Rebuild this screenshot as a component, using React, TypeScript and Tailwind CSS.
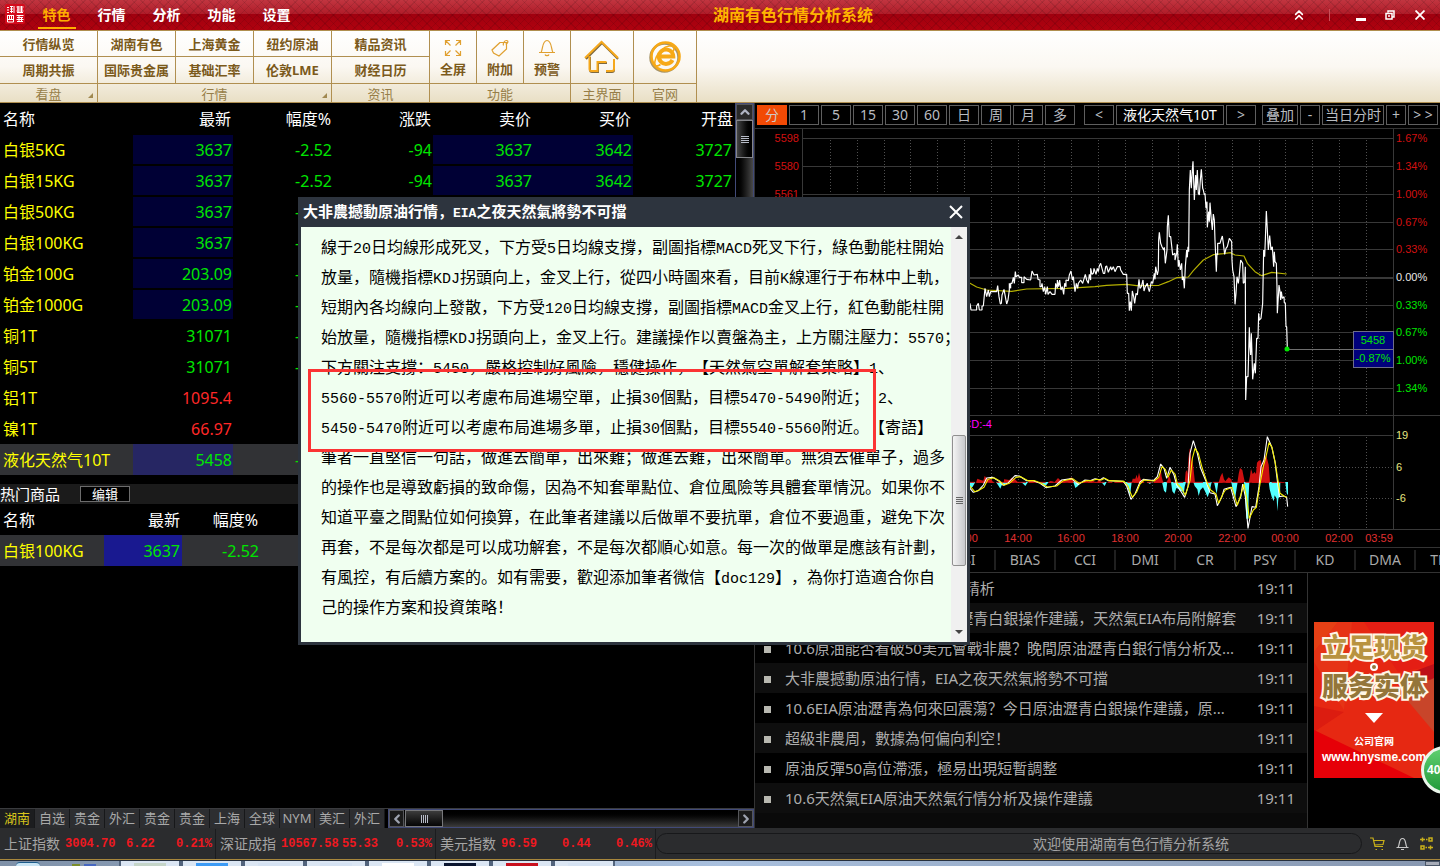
import React from "react";
import { ChevronsUp, ChevronLeft, ChevronRight, ChevronUp } from "lucide-react";

type Quote = {
  name: string;
  last: string;
  pct: string;
  chg?: string;
  ask?: string;
  bid?: string;
  open?: string;
  tint?: boolean;
  up?: boolean;
  selected?: boolean;
};

const quotes: Quote[] = [
  { name: "白银5KG", last: "3637", pct: "-2.52", chg: "-94", ask: "3637", bid: "3642", open: "3727", tint: true },
  { name: "白银15KG", last: "3637", pct: "-2.52", chg: "-94", ask: "3637", bid: "3642", open: "3727", tint: true },
  { name: "白银50KG", last: "3637", pct: "-2.52", tint: true },
  { name: "白银100KG", last: "3637", pct: "-2.52", tint: true },
  { name: "铂金100G", last: "203.09", pct: "-1.86", tint: true },
  { name: "铂金1000G", last: "203.09", pct: "-1.86", tint: true },
  { name: "铜1T", last: "31071", pct: "-0.52" },
  { name: "铜5T", last: "31071", pct: "-0.52" },
  { name: "铝1T", last: "1095.4", pct: "0.32", up: true },
  { name: "镍1T", last: "66.97", pct: "0.41", up: true },
  { name: "液化天然气10T", last: "5458", pct: "-0.87", selected: true },
];

const news = [
  "10.6現貨原油瀝青行情走勢精析",
  "10.06原油行情如何布局？瀝青白銀操作建議，天然氣EIA布局附解套",
  "10.6原油能否看破50美元會戰非農？晚間原油瀝青白銀行情分析及...",
  "大非農撼動原油行情，EIA之夜天然氣將勢不可擋",
  "10.6EIA原油瀝青為何來回震蕩？今日原油瀝青白銀操作建議，原...",
  "超級非農周，數據為何偏向利空！",
  "原油反彈50高位滯漲，極易出現短暫調整",
  "10.6天然氣EIA原油天然氣行情分析及操作建議",
];

const article = [
  "線于20日均線形成死叉，下方受5日均線支撐，副圖指標MACD死叉下行，綠色動能柱開始",
  "放量，隨機指標KDJ拐頭向上，金叉上行，從四小時圖來看，目前K線運行于布林中上軌，",
  "短期內各均線向上發散，下方受120日均線支撐，副圖指標MACD金叉上行，紅色動能柱開",
  "始放量，隨機指標KDJ拐頭向上，金叉上行。建議操作以賣盤為主，上方關注壓力：5570；",
  "下方關注支撐：5450，嚴格控制好風險，穩健操作，【天然氣空單解套策略】1、",
  "5560-5570附近可以考慮布局進場空單，止損30個點，目標5470-5490附近； 2、",
  "5450-5470附近可以考慮布局進場多單，止損30個點，目標5540-5560附近。【寄語】",
  "筆者一直堅信一句話，做進去簡單，出來難；做進去難，出來簡單。無須去催單子，過多",
  "的操作也是導致虧損的致命傷，因為不知套單點位、倉位風險等具體套單情況。如果你不",
  "知道平臺之間點位如何換算，在此筆者建議以后做單不要抗單，倉位不要過重，避免下次",
  "再套，不是每次都是可以成功解套，不是每次都順心如意。每一次的做單是應該有計劃，",
  "有風控，有后續方案的。如有需要，歡迎添加筆者微信【doc129】，為你打造適合你自",
  "己的操作方案和投資策略！",
];

const indices = [
  { name: "上证指数", value: "3004.70", diff: "6.22", pct: "0.21%" },
  { name: "深证成指", value: "10567.58", diff: "55.33", pct: "0.53%" },
  { name: "美元指数", value: "96.59", diff: "0.44", pct: "0.46%" },
];

const periods = ["1", "5", "15", "30", "60", "日", "周", "月", "多"];
const studies = ["KDJ", "MA", "MACD", "RSI", "BIAS", "CCI", "DMI", "CR", "PSY", "KD", "DMA", "TRIX"];
const boards = ["湖南", "自选", "贵金", "外汇", "贵金", "贵金", "上海", "全球", "NYM", "美汇", "外汇"];

// latin runs are set in a typewriter face, the rest stays in the CJK one
const Mixed = ({ text, latin }: { text: string; latin: string }) => (
  <>
    {text.split(/([A-Za-z0-9 -]+)/).map((part, i) =>
      i % 2 ? (
        <span key={i} className={latin}>
          {part}
        </span>
      ) : (
        part
      )
    )}
  </>
);

const TitleBar = () => (
  <header className="flex h-[30px] items-stretch bg-[repeating-linear-gradient(45deg,#00000018_0_1px,transparent_1px_6px),repeating-linear-gradient(135deg,#00000018_0_1px,transparent_1px_6px),linear-gradient(#c13540_0%,#b01c29_46%,#a0000f_48%,#b0020f_100%)]">
    <div className="flex w-[306px] shrink-0 items-stretch pl-[5px]">
      <svg viewBox="0 0 20 20" className="mt-1 h-5 w-5" fill="none" stroke="#fff" strokeWidth="1">
        <rect width="20" height="20" rx="2" fill="#d40b1c" stroke="none" />
        <path d="M2 3.5h2M2 6h2M2 8.500h2M5 2.500h3M5 5h3M5 7.500h3M6.500 2v7M9 2v7M11.500 3h7M12 5h6M11.500 7h7M13 2v6M16.500 2v6M12 8.500h6" />
        <path d="M2 11.500h7M2.500 12v6h6v-6M4.500 12v3M6.500 12v3M3 15.500h5M11.500 11.500h7M12 13.500h6M11.500 15.500h7M14 11v7M16.500 13v5M12 17.500h6" />
      </svg>
      <nav className="ml-1 flex">
        {["特色", "行情", "分析", "功能", "设置"].map((item, i) => (
          <button
            key={item}
            className={
              i === 0
                ? "flex w-[55px] justify-center text-[14px] leading-[30px] font-bold text-[#ffae00]"
                : "flex w-[55px] justify-center text-[14px] leading-[30px] font-bold text-white"
            }
          >
            <span className={i === 0 ? "h-[29px] border-b-2 border-[#ffae00] px-[5px]" : ""}>{item}</span>
          </button>
        ))}
      </nav>
    </div>
    <h1 className="flex-1 text-center text-[16px] leading-[31px] font-bold text-[#ffb400]">湖南有色行情分析系统</h1>
    <div className="flex w-[160px] shrink-0 items-center text-white">
      <button aria-label="收起" className="ml-[11px] w-4">
        <ChevronsUp size={16} strokeWidth={2.5} />
      </button>
      <span className="ml-[22px] h-3 w-px bg-[#c8505a]" />
      <button aria-label="最小化" className="ml-[26px] flex h-3 w-[10px] items-end">
        <span className="h-[3px] w-full bg-white" />
      </button>
      <button aria-label="还原" className="ml-[19px]">
        <svg viewBox="0 0 10 10" className="h-[10px] w-[10px]" fill="none" stroke="#fff" strokeWidth="1.500">
          <path d="M3 2.500V1h6v6H7.500M1 3.500h6V9H1zM3 6h2" />
        </svg>
      </button>
      <button aria-label="关闭" className="ml-5">
        <svg viewBox="0 0 10 10" className="h-[10px] w-[10px]" stroke="#fff" strokeWidth="1.800">
          <path d="M.5.5l9 9M9.500.5l-9 9" />
        </svg>
      </button>
    </div>
  </header>
);

const Corner = () => (
  <svg viewBox="0 0 5 5" className="absolute right-1 bottom-1 h-[5px] w-[5px]">
    <path d="M5 0v5H0z" fill="#a08850" />
  </svg>
);

const RibbonGroup = ({
  label,
  width,
  corner,
  children,
}: {
  label: string;
  width: string;
  corner?: boolean;
  children: React.ReactNode;
}) => (
  <div className={`${width} flex shrink-0 flex-col border-r border-[#b08f50]`}>
    <div className="flex h-[52px] shrink-0">{children}</div>
    <div className="relative h-[19px] border-t border-[#b08f50] text-center text-[13px] leading-5 text-[#977e48]">
      {label}
      {corner && <Corner />}
    </div>
  </div>
);

const Stack = ({ items }: { items: string[] }) => (
  <div className="flex flex-1 flex-col border-r border-[#b08f50] last:border-r-0">
    <button className="h-[26px] border-b border-[#b08f50] text-[13px] leading-[26px] font-bold text-[#7b5a1b]">{items[0]}</button>
    <button className="h-[26px] text-[13px] leading-[26px] font-bold text-[#7b5a1b]">{items[1]}</button>
  </div>
);

const Tool = ({ label, children }: { label: string; children: React.ReactNode }) => (
  <button className="flex flex-1 flex-col items-center border-r border-[#b08f50] pt-2 text-[13px] font-bold text-[#7b5a1b] last:border-r-0">
    <svg viewBox="0 0 18 18" className="h-[18px] w-[18px]" fill="none" stroke="#e0a030" strokeWidth="1.200">
      {children}
    </svg>
    <span className="mt-[2px] leading-5">{label}</span>
  </button>
);

const Ribbon = () => (
  <div className="flex h-[73px] border-y border-[#b08f50] bg-linear-to-b from-white via-[#fbf8f2] to-[#e9dfc5]">
    <RibbonGroup label="看盘" width="w-[98px]" corner>
      <Stack items={["行情纵览", "周期共振"]} />
    </RibbonGroup>
    <RibbonGroup label="行情" width="w-[234px]" corner>
      <Stack items={["湖南有色", "国际贵金属"]} />
      <Stack items={["上海黄金", "基础汇率"]} />
      <Stack items={["纽约原油", "伦敦LME"]} />
    </RibbonGroup>
    <RibbonGroup label="资讯" width="w-[98px]">
      <Stack items={["精品资讯", "财经日历"]} />
    </RibbonGroup>
    <RibbonGroup label="功能" width="w-[141px]">
      <Tool label="全屏">
        <path d="M1.500 6V1.500H6M12 1.500h4.500V6M16.500 12v4.500H12M6 16.500H1.500V12M2 2l4.500 4.500M16 2l-4.500 4.500M16 16l-4.500-4.500M2 16l4.500-4.500" />
      </Tool>
      <Tool label="附加">
        <path d="M9 3.500L1 11l1.500 3L8 17l7.500-7V3.500zM12.500 6.500c-1-2 1-5 3-5s2 3-1 3.500" />
      </Tool>
      <Tool label="预警">
        <path d="M1 13.500h16M3 13.500c2-3 1-12 6-12s4 9 6 12M7 15.500c.5 1.500 3.500 1.500 4 0" />
      </Tool>
    </RibbonGroup>
    <RibbonGroup label="主界面" width="w-[63px]">
      <button aria-label="主界面" className="flex flex-1 items-center justify-center">
        <svg viewBox="0 0 36 34" className="h-[34px] w-9" fill="none">
          <path d="M2 19L18 3l16 16M6 17v13q0 2 2 2h6v-9h8v1M22 32h6q2 0 2-2V20" stroke="#7d6940" strokeWidth="2" />
          <path d="M1 18L17.500 2 34 18M5.500 16v13q0 2 2 2h6v-9h8v1M22 31h6q2 0 2-2V19" stroke="#f5a81c" strokeWidth="2" />
        </svg>
      </button>
    </RibbonGroup>
    <RibbonGroup label="官网" width="w-[63px]">
      <button aria-label="官网" className="flex flex-1 items-center justify-center">
        <svg viewBox="0 0 34 34" className="h-[34px] w-[34px]" fill="none">
          <circle cx="16.500" cy="17.500" r="14" stroke="#a79468" strokeWidth="2.500" />
          <circle cx="17.500" cy="16.500" r="14" stroke="#f7a916" strokeWidth="2.600" />
          <path d="M24.500 20a7.200 7.200 0 1 1 .8-3.500H12" stroke="#f7a916" strokeWidth="4" />
          <path d="M14 9.500C18 5.500 25.500 5 26 7.500c.3 2-1 4-1 4M10.500 13c-4 6-5 13-2 13 2 0 4-1.500 4-1.500" stroke="#f7a916" strokeWidth="1.600" />
        </svg>
      </button>
    </RibbonGroup>
  </div>
);

const grid = "w-full table-fixed border-separate border-spacing-0 text-right text-[16px] leading-[27px] [&_td]:pt-[2px] [&_th]:pt-[2px]";

const QuoteTable = () => (
  <table className={grid}>
    <colgroup>
      <col className="w-[133px]" />
      <col className="w-[100px]" />
      <col className="w-[100px]" />
      <col className="w-[100px]" />
      <col className="w-[100px]" />
      <col className="w-[100px]" />
      <col />
    </colgroup>
    <thead>
      <tr className="h-[31px] text-white">
        <th className="pl-[3px] text-left font-normal">名称</th>
        {["最新", "幅度%", "涨跌", "卖价", "买价", "开盘"].map((h) => (
          <th key={h} className="pr-[2px] font-normal">
            {h}
          </th>
        ))}
      </tr>
    </thead>
    <tbody>
      {quotes.map((q) => {
        const tint = q.tint ? "border-y border-black bg-[#000035] pr-px" : "pr-px";
        return (
          <tr key={q.name} className={`h-[31px] ${q.selected ? "bg-[#313235]" : ""} ${q.up ? "text-[#ff2828]" : "text-[#00e600]"}`}>
            <td className="pl-[3px] text-left whitespace-nowrap text-[#ffff00]">{q.name}</td>
            <td className={q.selected ? "bg-[#262663] pr-px" : tint}>{q.last}</td>
            <td className="pr-px">{q.pct}</td>
            <td className="pr-px">{q.chg}</td>
            <td className={tint}>{q.ask}</td>
            <td className={tint}>{q.bid}</td>
            <td className="pr-[3px]">{q.open}</td>
          </tr>
        );
      })}
    </tbody>
  </table>
);

const HotGoods = () => (
  <section className="mt-[9px]">
    <div className="flex h-5 items-center bg-[#1b1b1b] text-[15px] leading-5 text-white">
      热门商品
      <button className="ml-5 h-4 w-[50px] border border-[#6c6c6c] bg-black text-[13px] leading-[14px]">编辑</button>
    </div>
    <table className={grid}>
      <colgroup>
        <col className="w-[104px]" />
        <col className="w-[78px]" />
        <col className="w-[78px]" />
        <col />
      </colgroup>
      <thead>
        <tr className="h-[31px] text-white">
          <th className="pl-[3px] text-left font-normal">名称</th>
          <th className="pr-[2px] font-normal">最新</th>
          <th className="pr-[2px] font-normal">幅度%</th>
          <th />
        </tr>
      </thead>
      <tbody>
        <tr className="h-[31px] bg-[#313235] text-[#00e600]">
          <td className="pl-[3px] text-left whitespace-nowrap text-[#ffff00]">白银100KG</td>
          <td className="bg-[#191990] pr-[2px]">3637</td>
          <td className="pr-px">-2.52</td>
          <td />
        </tr>
      </tbody>
    </table>
  </section>
);

const BoardTabs = () => (
  <div className="mt-auto flex h-5 border-t border-[#3a3b3e]">
    <nav className="flex">
      {boards.map((b, i) => (
        <button
          key={i}
          className={
            i === 0
              ? "w-[35px] border-r border-[#17181a] bg-[#1c1d1f] text-[13px] leading-[19px] whitespace-nowrap text-[#d8c41c]"
              : "w-[35px] border-r border-[#17181a] bg-[#2d2e31] text-[13px] leading-[19px] whitespace-nowrap text-[#a9a9a9]"
          }
        >
          {b}
        </button>
      ))}
    </nav>
    <div className="ml-[3px] flex flex-1 border border-[#414a78] bg-linear-to-b from-black to-[#3c3c3c]">
      <button aria-label="向左" className="flex w-[15px] items-center justify-center border border-[#55565a] bg-[#1b1b1b] text-[#9ea3b0]">
        <ChevronLeft size={14} strokeWidth={4} className="shrink-0" />
      </button>
      <div className="ml-px flex w-[38px] justify-center gap-px border border-[#77787b] bg-linear-to-b from-[#3c3c3c] to-[#060606] pt-1">
        {[0, 1, 2, 3].map((n) => (
          <span key={n} className="h-2 w-px bg-[#b8bcc8]" />
        ))}
      </div>
      <button aria-label="向右" className="ml-auto flex w-[15px] items-center justify-center border border-[#55565a] bg-[#1b1b1b] text-[#9ea3b0]">
        <ChevronRight size={14} strokeWidth={4} className="shrink-0" />
      </button>
    </div>
  </div>
);

const SideScroll = () => (
  <div className="h-[372px] w-[19px] shrink-0 border border-[#414a78] bg-linear-to-r from-black to-[#4a4a4a]">
    <button aria-label="向上" className="flex h-4 w-full items-center justify-center border border-[#55565a] bg-[#2a2a2a] text-[#b0b5c4]">
      <ChevronUp size={14} strokeWidth={4} className="shrink-0" />
    </button>
    <div className="flex h-[38px] flex-col items-center justify-center gap-px border border-[#85868a] bg-linear-to-r from-[#454545] to-black">
      {[0, 1, 2, 3].map((n) => (
        <span key={n} className="h-px w-2 bg-[#b8bcc8]" />
      ))}
    </div>
  </div>
);

const boxed = "h-5 border border-[#5f5f5f] text-center text-[14px] leading-[18px] text-[#b9bcc0] whitespace-nowrap";

const ChartBar = () => (
  <div className="flex h-[26px] items-start border-b border-[#333] pt-[2px] pl-[2px]">
    <div className="flex gap-[2px]">
      <button className="h-5 w-[30px] bg-[#f24a05] text-[14px] leading-5 text-[#d0c8c4]">分</button>
      {periods.map((p) => (
        <button key={p} className={`${boxed} w-[30px]`}>
          {p}
        </button>
      ))}
    </div>
    <div className="ml-[9px] flex gap-[2px]">
      <button className={`${boxed} w-[30px]`}>&lt;</button>
      <button className="h-5 w-[108px] border border-[#5f5f5f] text-center text-[14px] leading-[18px] text-white">液化天然气10T</button>
      <button className={`${boxed} w-[30px]`}>&gt;</button>
    </div>
    <div className="ml-[6px] flex gap-[2px]">
      <button className={`${boxed} w-9`}>叠加</button>
      <button className={`${boxed} w-5`}>-</button>
      <button className={`${boxed} w-[62px]`}>当日分时</button>
      <button className={`${boxed} w-5`}>+</button>
      <button className={`${boxed} w-[30px]`}>&gt; &gt;</button>
    </div>
  </div>
);

const levels = [
  { y: 138, left: "5598", right: "1.67%", color: "#d21010" },
  { y: 166, left: "5580", right: "1.34%", color: "#d21010" },
  { y: 194, left: "5561", right: "1.00%", color: "#d21010" },
  { y: 222, right: "0.67%", color: "#d21010" },
  { y: 249, right: "0.33%", color: "#d21010" },
  { y: 277, right: "0.00%", color: "#e8e8e8" },
  { y: 305, right: "0.33%", color: "#00e600" },
  { y: 332, right: "0.67%", color: "#00e600" },
  { y: 360, right: "1.00%", color: "#00e600" },
  { y: 388, right: "1.34%", color: "#00e600" },
];

const times = [
  { x: 964, t: "12:00" },
  { x: 1018, t: "14:00" },
  { x: 1071, t: "16:00" },
  { x: 1125, t: "18:00" },
  { x: 1178, t: "20:00" },
  { x: 1232, t: "22:00" },
  { x: 1285, t: "00:00" },
  { x: 1339, t: "02:00" },
  { x: 1379, t: "03:59" },
];

const gridX = [830, 857, 884, 910, 937, 964, 991, 1018, 1044, 1071, 1098, 1125, 1152, 1178, 1205, 1232, 1259, 1285, 1312, 1339, 1366];

const PriceChart = () => (
  <svg
    viewBox="755 129 685 418"
    preserveAspectRatio="xMinYMin meet"
    className="h-[418px] w-full font-['Liberation_Sans',sans-serif] text-[11px]"
    fill="none"
  >
    <g shapeRendering="crispEdges" stroke="#383838">
      {gridX.map((x) => (
        <path key={x} d={`M${x}.5 140V415M${x}.5 437V529`} strokeDasharray="1 2" stroke="#505050" />
      ))}
      {levels.map((l) => (
        <path key={l.y} d={`M803 ${l.y}.5H1393`} strokeWidth={l.y === 277 ? 2 : 1} />
      ))}
      <path d="M802.500 129V529M1393.500 129V529M755 415.500H1440M803 435.500H1393M755 529.500H1440" />
      <path d="M803 467.500H1393M803 498.500H1393" strokeDasharray="1 2" stroke="#505050" />
    </g>
    {levels.map((l) => (
      <g key={l.y} fill={l.color}>
        {l.left && (
          <text x="799" y={l.y + 4} textAnchor="end">
            {l.left}
          </text>
        )}
        <text x="1396" y={l.y + 4}>
          {l.right}
        </text>
      </g>
    ))}
    <g transform="translate(960 140) scale(.33333)" strokeWidth="3.500" strokeLinejoin="bevel">
      <polyline
        stroke="#b5b000"
        points="-40,400 0,415 30,430 50,441 80,450 155,454 200,447 320,445 405,440 440,436 500,433 530,437 597,436 625,425 650,413 685,411 700,392 730,360 760,344 790,341 812,338 825,345 852,348 862,370 885,395 905,407 935,397 980,402"
      />
      <polyline
        stroke="#fff"
        points="30,490 33,510 50,510 50,498 55,490 58,510 66,510 66,498 70,498 75,445 80,470 85,450 88,470 92,455 110,455 113,437 117,470 121,492 124,490 126,465 132,448 136,470 140,492 144,480 148,450 148,430 152,445 152,430 156,430 160,412 163,430 166,395 168,410 175,405 178,412 185,412 185,428 192,428 192,410 200,418 212,420 216,393 222,405 232,403 234,418 240,420 240,440 244,440 246,430 250,455 254,440 257,463 262,440 264,463 270,455 276,463 285,463 287,430 292,445 292,420 296,440 299,420 303,450 307,440 311,463 314,430 318,440 318,420 325,422 328,405 333,393 337,420 340,410 345,455 349,430 353,445 355,430 362,420 368,430 376,403 380,420 385,430 388,403 392,420 392,385 396,403 400,400 402,385 408,403 412,385 415,395 418,378 422,370 426,385 430,400 434,400 437,380 440,378 445,397 452,380 455,390 460,380 465,395 472,380 480,380 482,390 490,403 500,403 502,460 506,460 508,512 511,485 514,512 517,453 521,470 524,490 528,460 532,465 537,418 540,445 544,440 549,420 552,453 556,440 562,430 565,445 568,455 574,425 578,430 583,400 585,418 587,380 592,405 595,390 596,300 598,277 602,310 606,320 611,330 613,322 616,370 621,330 622,260 625,226 628,290 632,290 638,345 645,340 645,360 650,340 652,313 655,380 657,360 661,390 665,370 667,420 670,410 673,445 676,380 680,330 682,352 684,320 686,335 688,150 691,90 694,145 697,90 699,64 703,180 707,105 709,150 712,90 715,160 718,165 721,120 724,88 728,145 730,150 733,165 735,160 738,205 741,185 742,262 746,215 748,245 750,188 754,240 757,270 760,222 763,240 765,300 769,395 771,340 773,345 773,310 780,310 783,300 787,288 790,310 794,343 798,325 802,320 808,295 815,305 816,360 818,390 822,410 825,493 828,460 831,410 835,430 838,405 842,360 848,370 850,430 854,425 856,380 857,780 860,710 864,710 866,640 868,562 870,620 872,645 874,580 876,640 878,718 883,670 886,700 888,650 890,595 894,595 896,520 898,540 903,535 908,490 911,330 914,350 916,300 919,213 922,270 925,330 929,287 933,330 937,320 941,380 943,335 945,365 949,370 951,440 952,520 955,470 957,435 960,455 962,480 964,455 967,475 972,470 973,488 976,490 978,560 980,560 982,625"
      />
    </g>
    <path d="M1288 349.500H1353" stroke="#6e6e6e" />
    <circle cx="1287" cy="349" r="2.500" fill="#00e600" />
    <rect x="1353.500" y="331.500" width="40" height="36" fill="#00007c" stroke="#6e6e88" />
    <path d="M1353 349.500h41" stroke="#6e6e88" />
    <g fill="#00e600" textAnchor="middle">
      <text x="1373" y="344">5458</text>
      <text x="1373" y="362">-0.87%</text>
    </g>
    <text x="992" y="428" textAnchor="end" fill="#ff00ff">
      MACD:-4
    </text>
    <g transform="translate(960 410) scale(.33333)">
      <path
        fill="#cf1010"
        d="M48 218L52 206 62 210 70 212 74 198 82 206 95 209 100 218ZM132 218V208L148 210 155 203 165 208 175 218ZM205 218v-8l20 4 12 4ZM262 218l10-5 12 3 10-12 10 10 18-4 12-8 15 16ZM368 218l8-8 12 5 10-4 10 7ZM412 218l3-12 7 8 3 4ZM515 218l3-12 8 0 4-12 3 12 4-18 5 20 12 10ZM580 218l10-14 7 0 3-18 2-12 3 26 5 18ZM618 218l5-8 4-14 4 10 3 12ZM674 218l3-32 4-6 2 12 2-45 4-30 2-2 3 42 3-12 4 36 4 37ZM776 218l5-18 6-12 5 20 4 6 10-12 8 6 3 10ZM832 218l4-26 4-18 7 6 4 20 4 18ZM866 218l4-20 3-22 5 16 6-6 4 6 3-34 5-6 6-2 5 26 4-30 6-10 3 6 6 22 3 40 1 14ZM964 216h10v2h-10Z"
      />
      <path
        fill="#52ffff"
        d="M30 216h16l-8 14-8 6ZM108 216l8 12 5 8 4-10 10-2 5-8ZM180 216l8 4 8 8 8-12ZM242 216l8 12 10-4 6-8ZM340 216l6 18 8-6 8-12ZM424 216l10 12 6-12ZM490 216l6 4 6 8 8 30 5-42ZM560 216l10 6 5-6ZM606 216l6 26 6 6 4-32ZM633 216l4 28 6 8 6-18 6 2 4 6 8 2 4 10 3-24 4-14ZM700 216l4 12 8 10 4 20 5-18 8-8 6 12 8 18 6-18 6-28ZM762 216l8 35 5-35ZM814 216l5 30 6 22 6-40 2-12ZM852 216l3 40 4 70h6l1-70 2-40ZM926 216l3 22 6 22 6 14 3-18 6 10 2 38 3-38 5-10 1-40ZM976 216h8v40l-4-6Z"
      />
      <path d="M30 217H965" stroke="#cf1010" strokeWidth="3" strokeDasharray="14 6 30 9" />
      <g strokeWidth="3.300" strokeLinejoin="bevel">
        <polyline
          stroke="#fff"
          points="30,235 40,247 55,242 70,225 80,204 98,202 115,212 130,226 145,218 165,197 178,198 200,212 220,212 240,220 258,233 285,228 305,210 335,206 355,224 375,210 390,212 405,206 420,210 430,203 445,212 490,214 500,228 507,250 513,268 525,252 540,216 550,208 580,212 592,200 602,162 612,175 620,205 630,172 642,195 650,225 660,240 674,262 684,230 690,130 700,92 712,130 722,175 738,214 750,248 765,252 772,287 785,262 792,238 812,232 828,290 842,262 848,222 856,260 864,355 876,290 887,292 897,230 903,170 912,150 922,80 935,110 945,155 958,260 970,258 980,262 983,290"
        />
        <polyline
          stroke="#f5f000"
          points="30,228 44,245 58,240 72,232 84,208 102,203 118,212 132,226 148,220 168,202 182,200 204,212 224,212 244,220 262,231 290,228 310,212 338,206 358,220 378,212 394,212 410,208 424,210 434,205 448,212 492,214 504,228 510,245 517,262 530,246 540,222 552,210 582,213 596,202 606,170 616,178 624,202 634,180 645,192 652,222 664,234 676,256 690,212 697,145 705,115 715,130 726,172 742,220 752,240 768,252 776,280 790,250 796,240 816,232 832,286 844,250 852,222 860,265 868,325 880,300 889,292 900,222 910,170 918,140 927,98 936,112 946,160 960,250 972,258 980,262"
        />
      </g>
    </g>
    <g fill="#e6e682">
      <text x="1396" y="439">19</text>
      <text x="1396" y="471">6</text>
      <text x="1396" y="502">-6</text>
    </g>
    <g fill="#e03030" textAnchor="middle">
      {times.map((t) => (
        <text key={t.t} x={t.x} y="542">
          {t.t}
        </text>
      ))}
    </g>
  </svg>
);

const StudyTabs = () => (
  <div className="flex h-[26px] overflow-hidden border-y border-[#333] py-[2px] pl-px">
    {studies.map((s) => (
      <button key={s} className="w-[60px] shrink-0 border-r-2 border-[#202020] text-[14px] leading-5 text-[#a9a9a9]">
        {s}
      </button>
    ))}
  </div>
);

const Advert = () => (
  <a href="#hnysme" className="relative mt-[49px] block h-[156px] w-[120px] shrink-0 overflow-hidden bg-[#e62812] pt-[10px] text-center">
    <svg viewBox="0 0 120 156" className="absolute inset-0 h-full w-full">
      <path d="M0 0h24L0 30z" fill="#e64015" />
      <path d="M24 0h14L30 88 0 40V30z" fill="#e63416" />
      <path d="M50 0h70v44L84 50z" fill="#e41e14" />
      <path d="M82 56l38-14v16z" fill="#bd1018" />
      <path d="M88 72l32-16v54z" fill="#c8452a" />
      <path d="M0 84l30 6-30 20z" fill="#dc1c10" />
      <path d="M0 108l100 48H0z" fill="#e60008" />
    </svg>
    <span className="relative block text-[26px] leading-[30px] font-black whitespace-nowrap text-[#b8923f] [-webkit-text-stroke:4px_#fff6e6] [paint-order:stroke_fill]">
      立足现货
    </span>
    <span className="relative mx-auto mt-px block h-2 w-2 rounded-full border-2 border-white bg-[#94763a]" />
    <span className="relative block text-[26px] leading-[30px] font-black whitespace-nowrap text-[#94763a] [-webkit-text-stroke:4px_#fff6e6] [paint-order:stroke_fill]">
      服务实体
    </span>
    <svg viewBox="0 0 18 10" className="relative mx-auto mt-3 h-[10px] w-[18px]">
      <path d="M0 0h18L9 10z" fill="#fff" />
    </svg>
    <span className="relative mt-2 block text-[10px] leading-5 font-bold text-white">公司官网</span>
    <span className="relative block font-['Liberation_Sans',sans-serif] text-[12px] leading-3 font-bold text-white">www.hnysme.com</span>
  </a>
);

const NewsPanel = () => (
  <div className="flex flex-1">
    <ul className="min-w-0 flex-1 border-r border-[#333] bg-[#0a0a0a]">
      {news.map((n, i) => (
        <li key={n} className={i % 2 ? "bg-[#0e0e0e]" : "bg-black"}>
          <a href="#news" className="flex h-[30px] items-center pr-3 pl-[9px] text-[15px] text-[#adadad]">
            <span className="mt-[2px] h-[7px] w-[7px] shrink-0 bg-[#b8b8b0]" />
            <span className="ml-[14px] min-w-0 flex-1 overflow-hidden whitespace-nowrap">{n}</span>
            <time className="shrink-0">19:11</time>
          </a>
        </li>
      ))}
    </ul>
    <aside className="flex w-[132px] shrink-0 justify-start pl-[6px]">
      <Advert />
    </aside>
  </div>
);

const figure = "font-['Liberation_Mono',monospace] text-[12px] font-bold text-[#f01820]";

const StatusBar = () => (
  <footer className="flex h-8 items-center border-b border-[#a8873c] bg-[#2b2c2e] text-[14px] text-[#a5a5a5]">
    {indices.map((x, i) => (
      <div
        key={x.name}
        className={
          i === 0
            ? "flex h-[30px] w-[216px] shrink-0 items-center border-r border-[#1b1c1e] pl-1"
            : "flex h-[30px] w-[220px] shrink-0 items-center border-r border-[#1b1c1e] pl-1 last-of-type:border-r-0"
        }
      >
        <span className="w-[61px]">{x.name}</span>
        <span className={`w-[61px] ${figure}`}>{x.value}</span>
        <span className={`w-[43px] ${figure}`}>{x.diff}</span>
        <span className={`flex-1 pr-[3px] text-right ${figure}`}>{x.pct}</span>
      </div>
    ))}
    <p className="h-[21px] flex-1 rounded-full border border-[#17181a] pr-[132px] text-right leading-[20px]">欢迎使用湖南有色行情分析系统</p>
    <div className="flex w-[78px] shrink-0 items-center gap-[11px] pl-2">
      <button aria-label="购物车">
        <svg viewBox="0 0 15 14" className="h-[14px] w-[15px]" fill="none" stroke="#c9b01a" strokeWidth="1.200">
          <path d="M0 1h3l2 8.500h8M4 3.500h10l-1 4-8.500.5M5.500 12.500h1.500M11.500 12.500H13" />
        </svg>
      </button>
      <button aria-label="提醒">
        <svg viewBox="0 0 13 14" className="h-[14px] w-[13px]" fill="none" stroke="#c8c8c8" strokeWidth="1.200">
          <path d="M.5 10.500h12M2 10.500C4 8 2.500 1.500 6.500 1.500S9 8 11 10.500M5 12.500h3" />
        </svg>
      </button>
      <button aria-label="网络">
        <svg viewBox="0 0 13 13" className="h-[13px] w-[13px]" fill="none" stroke="#c9b01a" strokeWidth="1.500">
          <path d="M9 1h3v3H9zM1 9h3v3H1zM0 2.500h5M2.500.5v4M6 2.500h1.500M8 10.500h5M10.500 8.500v4M5.500 10.500H7" />
        </svg>
      </button>
    </div>
  </footer>
);

const Taskbar = () => (
  <div className="flex h-[6px] border-t border-[#26303e] bg-linear-to-r from-[#7f91a8] via-[#a9c0de] to-[#8797b0]">
    <div className="flex w-[119px] shrink-0 items-end">
      <span className="ml-4 h-1 w-6 rounded-t-full border-t border-[#1d5d8c] bg-[#c8e4f4]" />
      <span className="ml-8 h-[2px] w-2 bg-[#7a8d2b]" />
      <span className="ml-1 h-[2px] w-3 bg-[#4667c0]" />
    </div>
    {["bg-[#c5d5c8]", "bg-[#3d9bf5]", "bg-[#d5e2f2]", "bg-[#d5e2f2]", "bg-white", "bg-[#0b1630]", "bg-[#c8101e]", "bg-[#d5e2f2]"].map((c, i) => (
      <div key={i} className="flex w-[62px] shrink-0 justify-center border-x-2 border-[#52647c] bg-[#dbe6f3] pt-[2px]">
        <span className={`h-[3px] w-8 ${c}`} />
      </div>
    ))}
    <span className="ml-auto w-[15px] border border-[#4a5668] bg-[#a7acb8]" />
  </div>
);

const ArticleDialog = () => (
  <div role="dialog" aria-label="大非農撼動原油行情" className="absolute top-[197px] left-[298px] flex h-[448px] w-[672px] flex-col border-x-[3px] border-b-[3px] border-[#2d343e] bg-[#2d343e]">
    <div className="flex h-[30px] shrink-0 items-center justify-between pr-[4px] pl-[2px]">
      <h2 className="text-[15px] leading-[30px] font-bold whitespace-nowrap text-white [text-spacing-trim:space-all]">
        <Mixed text="大非農撼動原油行情，EIA之夜天然氣將勢不可擋" latin="font-['Liberation_Mono',monospace] text-[13px]" />
      </h2>
      <button aria-label="关闭">
        <svg viewBox="0 0 14 14" className="h-[14px] w-[14px]" stroke="#fff" strokeWidth="2">
          <path d="M1 1l12 12M13 1L1 13" />
        </svg>
      </button>
    </div>
    <div className="flex min-h-0 flex-1">
      <div className="min-w-0 flex-1 overflow-hidden bg-[#f0fff0] pt-1 pl-5 font-['Noto_Sans_CJK_SC',sans-serif] text-[16px] leading-[30px] text-black [text-spacing-trim:space-all]">
        {article.map((line) => (
          <p key={line} className="h-[30px] whitespace-nowrap">
            <Mixed text={line} latin="font-['Liberation_Mono',monospace] text-[15px]" />
          </p>
        ))}
      </div>
      <div className="flex w-4 shrink-0 flex-col items-center bg-[#f0f0f0] py-2">
        <svg viewBox="0 0 8 4" className="h-1 w-2">
          <path d="M0 4l4-4 4 4z" fill="#444" />
        </svg>
        <div className="mt-[196px] flex h-[131px] w-[14px] flex-col items-center justify-center gap-px rounded-xs border border-[#909090] bg-linear-to-r from-[#f4f4f4] to-[#c8c8cc]">
          {[0, 1, 2, 3].map((n) => (
            <span key={n} className="h-px w-[7px] bg-[#666]" />
          ))}
        </div>
        <svg viewBox="0 0 8 4" className="mt-auto h-1 w-2">
          <path d="M0 0l4 4 4-4z" fill="#444" />
        </svg>
      </div>
    </div>
    {/* highlight over the two entry levels */}
    <div className="pointer-events-none absolute top-[172px] left-[7px] h-[83px] w-[568px] border-[3px] border-[#fb3434]" />
  </div>
);

export default function App() {
  return (
    <div className="relative flex min-h-screen flex-col overflow-hidden bg-black font-['Noto_Sans','Noto_Sans_CJK_SC',sans-serif]">
      <TitleBar />
      <Ribbon />
      <main className="flex flex-1">
        <div className="flex w-[755px] shrink-0 flex-col border-r border-[#333]">
          <div className="flex">
            <div className="flex-1">
              <QuoteTable />
            </div>
            <SideScroll />
          </div>
          <HotGoods />
          <BoardTabs />
        </div>
        <div className="flex min-w-0 flex-1 flex-col">
          <ChartBar />
          <PriceChart />
          <StudyTabs />
          <NewsPanel />
        </div>
      </main>
      <StatusBar />
      <Taskbar />
      <ArticleDialog />
      <button className="absolute right-[-29px] bottom-[72px] h-12 w-12 rounded-full border-[3px] border-[#eaf5ea] bg-linear-to-b from-[#5fd070] to-[#1f9a3a] pl-[3px] text-left font-['Liberation_Sans',sans-serif] text-[12px] font-bold text-white">
        40
      </button>
    </div>
  );
}
